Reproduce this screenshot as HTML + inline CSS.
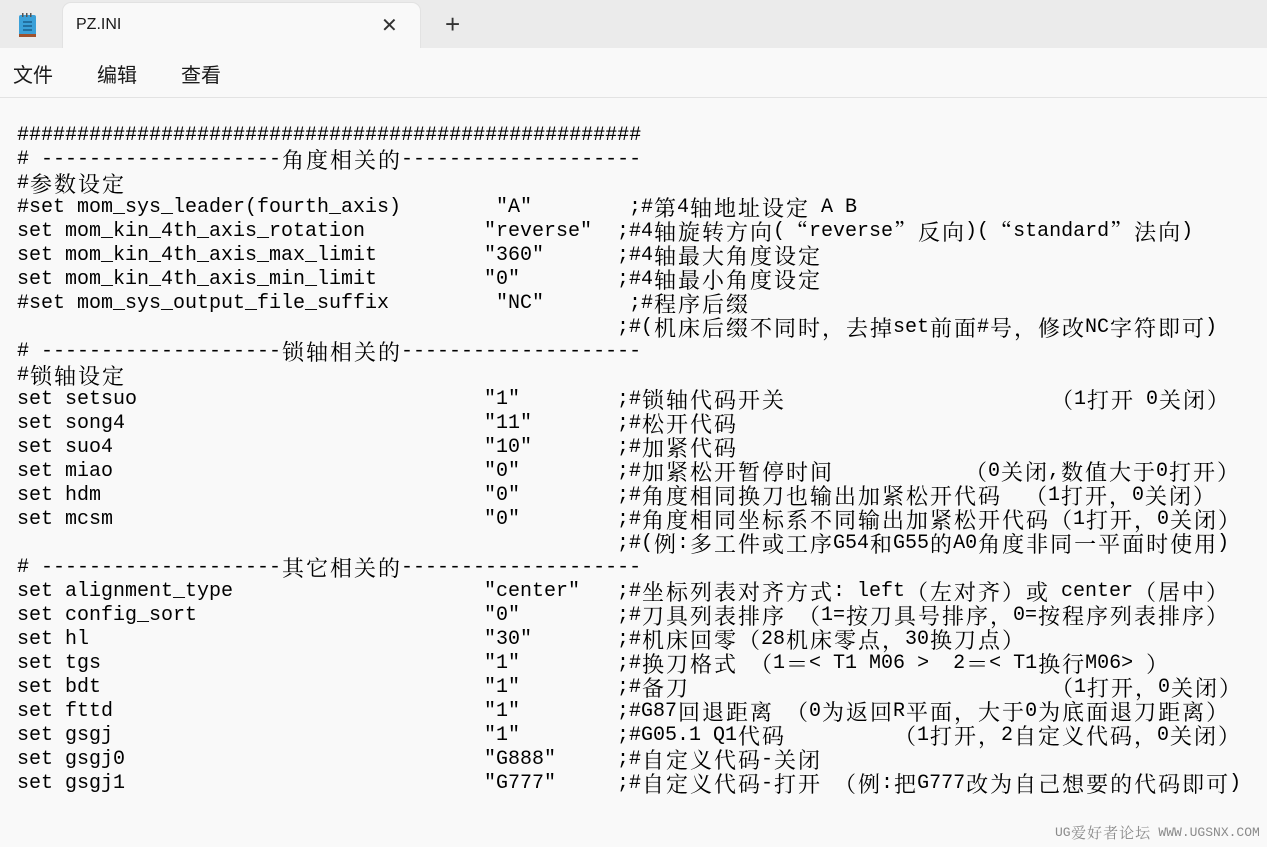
<!DOCTYPE html>
<html><head><meta charset="utf-8"><style>
html,body{margin:0;padding:0;width:1267px;height:847px;overflow:hidden;background:#f9f9f9;}
.tabbar{position:absolute;left:0;top:0;width:1267px;height:48px;background:#ebebeb;}
.tab{position:absolute;left:63px;top:3px;width:357px;height:45px;background:#f9f9f9;border-radius:8px 8px 0 0;box-shadow:0 0 0 1px #e2e2e2;}
.tab .ttl{position:absolute;left:13px;top:13px;font:500 16px "Liberation Sans",sans-serif;color:#1a1a1a;}
.tab .x{position:absolute;left:318px;top:10px;font:20px "Liberation Sans",sans-serif;color:#333;}
.plus{position:absolute;left:445px;top:11px;font:26px "Liberation Sans",sans-serif;color:#333;line-height:26px;}
.menu{position:absolute;left:0;top:48px;width:1267px;height:49px;background:#f9f9f9;border-bottom:1px solid #e3e3e3;font:20px "Noto Sans CJK SC",sans-serif;color:#1a1a1a;}
.menu span{position:absolute;top:11px;}
.c{position:absolute;left:0;top:124px;}
.l{position:absolute;height:24px;white-space:pre;font:20px/24px "Liberation Mono","Noto Serif CJK SC",monospace;color:#000;}
.w{display:inline-block;width:24px;height:24px;line-height:24px;vertical-align:top;text-align:center;font-size:22px;font-family:"Noto Serif CJK SC","Noto Sans CJK SC",serif;}
.wm{position:absolute;left:1055px;top:824px;height:18px;font:13px/18px "Liberation Mono","Noto Serif CJK SC",monospace;color:#8a8a8a;white-space:pre;}
.wm .w{width:16px;height:18px;line-height:18px;font-size:15px;}
</style></head><body>
<div class="tabbar">
<svg style="position:absolute;left:17px;top:12px" width="22" height="26" viewBox="0 0 22 26"><rect x="2" y="3" width="17" height="21" rx="2" fill="#3aa0d8"/><rect x="2" y="22" width="17" height="3" fill="#a0522d"/><g stroke="#1b5f8c" stroke-width="1.5"><line x1="6" y1="10" x2="15" y2="10"/><line x1="6" y1="14" x2="15" y2="14"/><line x1="6" y1="18" x2="15" y2="18"/></g><g fill="#555"><rect x="5" y="1" width="1.5" height="4"/><rect x="9" y="1" width="1.5" height="4"/><rect x="13" y="1" width="1.5" height="4"/></g></svg>
<div class="tab"><span class="ttl">PZ.INI</span><span class="x">✕</span></div>
<div class="plus">+</div>
</div>
<div class="menu"><span style="left:13px">文件</span><span style="left:97px">编辑</span><span style="left:181px">查看</span></div>
<div class="c" id="c"></div>
<div class="wm" id="wm">UG爱好者论坛 WWW.UGSNX.COM</div>
<script>
var L=[
[[17,"####################################################"]],
[[17,"# --------------------角度相关的--------------------"]],
[[17,"#参数设定"]],
[[17,"#set mom_sys_leader(fourth_axis)"],[496,"\"A\""],[629,";#第4轴地址设定 A B"]],
[[17,"set mom_kin_4th_axis_rotation"],[484,"\"reverse\""],[617,";#4轴旋转方向(“reverse”反向)(“standard”法向)"]],
[[17,"set mom_kin_4th_axis_max_limit"],[484,"\"360\""],[617,";#4轴最大角度设定"]],
[[17,"set mom_kin_4th_axis_min_limit"],[484,"\"0\""],[617,";#4轴最小角度设定"]],
[[17,"#set mom_sys_output_file_suffix"],[496,"\"NC\""],[629,";#程序后缀"]],
[[617,";#(机床后缀不同时，去掉set前面#号，修改NC字符即可)"]],
[[17,"# --------------------锁轴相关的--------------------"]],
[[17,"#锁轴设定"]],
[[17,"set setsuo"],[484,"\"1\""],[617,";#锁轴代码开关"],[1050,"（1打开 0关闭）"]],
[[17,"set song4"],[484,"\"11\""],[617,";#松开代码"]],
[[17,"set suo4"],[484,"\"10\""],[617,";#加紧代码"]],
[[17,"set miao"],[484,"\"0\""],[617,";#加紧松开暂停时间"],[964,"（0关闭,数值大于0打开）"]],
[[17,"set hdm"],[484,"\"0\""],[617,";#角度相同换刀也输出加紧松开代码"],[1024,"（1打开，0关闭）"]],
[[17,"set mcsm"],[484,"\"0\""],[617,";#角度相同坐标系不同输出加紧松开代码（1打开，0关闭）"]],
[[617,";#(例:多工件或工序G54和G55的A0角度非同一平面时使用)"]],
[[17,"# --------------------其它相关的--------------------"]],
[[17,"set alignment_type"],[484,"\"center\""],[617,";#坐标列表对齐方式: left（左对齐）或 center（居中）"]],
[[17,"set config_sort"],[484,"\"0\""],[617,";#刀具列表排序 （1=按刀具号排序，0=按程序列表排序）"]],
[[17,"set hl"],[484,"\"30\""],[617,";#机床回零（28机床零点，30换刀点）"]],
[[17,"set tgs"],[484,"\"1\""],[617,";#换刀格式 （1＝< T1 M06 >  2＝< T1换行M06> ）"]],
[[17,"set bdt"],[484,"\"1\""],[617,";#备刀"],[1050,"（1打开，0关闭）"]],
[[17,"set fttd"],[484,"\"1\""],[617,";#G87回退距离 （0为返回R平面，大于0为底面退刀距离）"]],
[[17,"set gsgj"],[484,"\"1\""],[617,";#G05.1 Q1代码"],[893,"（1打开，2自定义代码，0关闭）"]],
[[17,"set gsgj0"],[484,"\"G888\""],[617,";#自定义代码-关闭"]],
[[17,"set gsgj1"],[484,"\"G777\""],[617,";#自定义代码-打开 （例:把G777改为自己想要的代码即可)"]]
];
function wrap(s){var o="";for(var i=0;i<s.length;i++){var ch=s[i],k=ch.charCodeAt(0);var e=ch=="<"?"&lt;":ch==">"?"&gt;":ch=="&"?"&amp;":ch;o+=k>0x2000?'<span class="w">'+e+'</span>':e;}return o;}
var c=document.getElementById("c"),h="";
L.forEach(function(line,i){line.forEach(function(s){h+='<div class="l" style="left:'+s[0]+'px;top:'+(i*24)+'px">'+wrap(s[1])+'</div>';});});
c.innerHTML=h;
var wm=document.getElementById("wm");wm.innerHTML=wrap(wm.textContent);
</script>
</body></html>
